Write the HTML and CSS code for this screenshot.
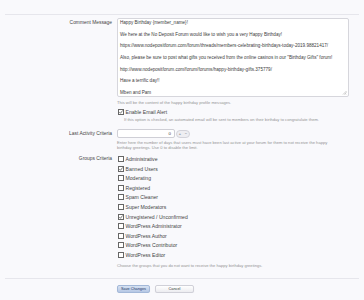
FILE: index.html
```html
<!DOCTYPE html>
<html lang="en">
<head>
    <meta charset="UTF-8">
    <title>Happy Birthday Options</title>
    <link rel="stylesheet" href="styles.css">
</head>
<body>
    <form class="form">
        <div class="row">
            <div class="row-label">Comment Message</div>
            <div class="row-input">
                <div class="textbox">Happy Birthday {member_name}!

We here at the No Deposit Forum would like to wish you a very Happy Birthday!

https://www.nodepositforum.com/forum/threads/members-celebrating-birthdays-today-2019.98821417/

Also, please be sure to post what gifts you received from the online casinos in our "Birthday Gifts" forum!

http://www.nodepositforum.com/forum/forums/happy-birthday-gifts.375779/

Have a terrific day!!

Mben and Pam<svg class="grip" viewBox="0 0 5 5"><path d="M1 4.5L4.5 1M2.5 4.5L4.5 2.5M4 4.5L4.5 4" stroke="#aaa" stroke-width="0.6"/></svg></div>
                <p class="hint">This will be the content of the happy birthday profile messages.</p>
            </div>
        </div>

        <div class="row row-email">
            <div class="row-label"></div>
            <div class="row-input">
                <label class="check check-email">
                    <svg class="box" viewBox="0 0 6 6"><rect x="0.5" y="0.5" width="5" height="5" fill="#fff" stroke="#666"/><path d="M1.3 3L2.5 4.3L4.7 1.4" fill="none" stroke="#444" stroke-width="0.7"/></svg>
                    Enable Email Alert
                </label>
                <p class="hint hint-indent">If this option is checked, an automated email will be sent to members on their birthday to congratulate them.</p>
            </div>
        </div>

        <div class="row row-activity">
            <div class="row-label">Last Activity Criteria</div>
            <div class="row-input">
                <div class="spin">
                    <div class="spin-box">0</div>
                    <div class="spin-buttons"><span>+</span><span>&minus;</span></div>
                </div>
                <p class="hint hint-two">Enter here the number of days that users must have been last active at your forum for them to not receive the happy<br>birthday greetings. Use 0 to disable the limit.</p>
            </div>
        </div>

        <div class="row row-groups">
            <div class="row-label">Groups Criteria</div>
            <div class="row-input">
                <ul class="groups">
                    <li class="check"><svg class="box" viewBox="0 0 6 6"><rect x="0.5" y="0.5" width="5" height="5" fill="#fff" stroke="#666"/></svg>Administrative</li>
                    <li class="check"><svg class="box" viewBox="0 0 6 6"><rect x="0.5" y="0.5" width="5" height="5" fill="#fff" stroke="#666"/><path d="M1.3 3L2.5 4.3L4.7 1.4" fill="none" stroke="#444" stroke-width="0.7"/></svg>Banned Users</li>
                    <li class="check"><svg class="box" viewBox="0 0 6 6"><rect x="0.5" y="0.5" width="5" height="5" fill="#fff" stroke="#666"/></svg>Moderating</li>
                    <li class="check"><svg class="box" viewBox="0 0 6 6"><rect x="0.5" y="0.5" width="5" height="5" fill="#fff" stroke="#666"/></svg>Registered</li>
                    <li class="check"><svg class="box" viewBox="0 0 6 6"><rect x="0.5" y="0.5" width="5" height="5" fill="#fff" stroke="#666"/></svg>Spam Cleaner</li>
                    <li class="check"><svg class="box" viewBox="0 0 6 6"><rect x="0.5" y="0.5" width="5" height="5" fill="#fff" stroke="#666"/></svg>Super Moderators</li>
                    <li class="check"><svg class="box" viewBox="0 0 6 6"><rect x="0.5" y="0.5" width="5" height="5" fill="#fff" stroke="#666"/><path d="M1.3 3L2.5 4.3L4.7 1.4" fill="none" stroke="#444" stroke-width="0.7"/></svg>Unregistered / Unconfirmed</li>
                    <li class="check"><svg class="box" viewBox="0 0 6 6"><rect x="0.5" y="0.5" width="5" height="5" fill="#fff" stroke="#666"/></svg>WordPress Administrator</li>
                    <li class="check"><svg class="box" viewBox="0 0 6 6"><rect x="0.5" y="0.5" width="5" height="5" fill="#fff" stroke="#666"/></svg>WordPress Author</li>
                    <li class="check"><svg class="box" viewBox="0 0 6 6"><rect x="0.5" y="0.5" width="5" height="5" fill="#fff" stroke="#666"/></svg>WordPress Contributor</li>
                    <li class="check"><svg class="box" viewBox="0 0 6 6"><rect x="0.5" y="0.5" width="5" height="5" fill="#fff" stroke="#666"/></svg>WordPress Editor</li>
                </ul>
                <p class="hint hint-groups">Choose the groups that you do not want to receive the happy birthday greetings.</p>
            </div>
        </div>
    </form>

    <div class="actions">
        <button class="button button-primary">Save Changes</button>
        <button class="button">Cancel</button>
    </div>
</body>
</html>
```

FILE: styles.css
```css
body {
    margin: 0;
    background-color: #f9f9fc;
    font-family: "Liberation Sans", Arial, sans-serif;
    color: #444;
}

.form {
    margin: 14px 5px 0;
    border-top: 1px solid #e6e6ec;
    padding-top: 3px;
    padding-bottom: 9.5px;
}

.row {
    display: grid;
    grid-template-columns: 107px 232px;
    column-gap: 5px;
}

.row-label {
    text-align: right;
    font-size: 4.9px;
    line-height: 10px;
    color: #444;
}

.textbox {
    position: relative;
    height: 79px;
    box-sizing: border-box;
    border: 1px solid #d6d6dc;
    border-radius: 2px;
    background: #fff;
    padding: 1.2px 2px;
    font-size: 4.6px;
    line-height: 5.8px;
    white-space: pre-wrap;
    color: #3c3c3c;
}

.grip {
    position: absolute;
    right: 1px;
    bottom: 1px;
    width: 5px;
    height: 5px;
}

.hint {
    margin: 2.5px 0 0;
    font-size: 4.1px;
    line-height: 5px;
    color: #949494;
    white-space: nowrap;
}

.hint-indent {
    margin-top: 0.5px;
    padding-left: 7px;
}

.row-email {
    margin-top: 3.5px;
}

.check {
    display: flex;
    align-items: center;
    gap: 1.5px;
    font-size: 5.1px;
    color: #444;
}

.check-email {
    height: 8px;
    margin-left: 1px;
}

.box {
    width: 6px;
    height: 6px;
    flex-shrink: 0;
}

.row-activity {
    margin-top: 7.5px;
}

.row-activity .row-label {
    line-height: 9px;
}

.spin {
    display: flex;
    align-items: center;
    gap: 1px;
}

.spin-box {
    width: 58px;
    height: 9px;
    box-sizing: border-box;
    border: 1px solid #cfcfd6;
    border-radius: 2px;
    background: #fff;
    text-align: right;
    padding-right: 3px;
    font-size: 4.4px;
    line-height: 7px;
}

.spin-buttons {
    display: flex;
    align-items: center;
    justify-content: space-around;
    width: 14px;
    height: 8px;
    box-sizing: border-box;
    border: 1px solid #d3d3da;
    border-radius: 4px;
    background: #eeeef2;
    font-size: 4px;
    line-height: 6px;
    color: #555;
}

.hint-two {
    margin-top: 1.5px;
}

.row-groups {
    margin-top: 4.7px;
}

.row-groups .row-label {
    line-height: 9.6px;
}

.groups {
    list-style: none;
    margin: 0;
    padding: 0 0 0 1px;
}

.groups .check {
    height: 9.6px;
}

.hint-groups {
    margin-top: 3.7px;
}

.actions {
    margin: 0 5px;
    border-top: 1px solid #e6e6ec;
    padding: 6px 0 0 112px;
    display: flex;
    gap: 5px;
}

.button {
    height: 8px;
    width: 39px;
    padding: 0;
    border: 1px solid #d0d0d8;
    border-radius: 2px;
    background: linear-gradient(#ffffff, #ececf0);
    font-family: "Liberation Sans", Arial, sans-serif;
    font-size: 3.8px;
    color: #333;
    box-shadow: 0 1px 1px rgba(0, 0, 0, 0.08);
}

.button-primary {
    width: 33px;
    border-color: #a3b8d8;
    background: linear-gradient(#d6e2f2, #b5c7e4);
    color: #1d3563;
}
```
